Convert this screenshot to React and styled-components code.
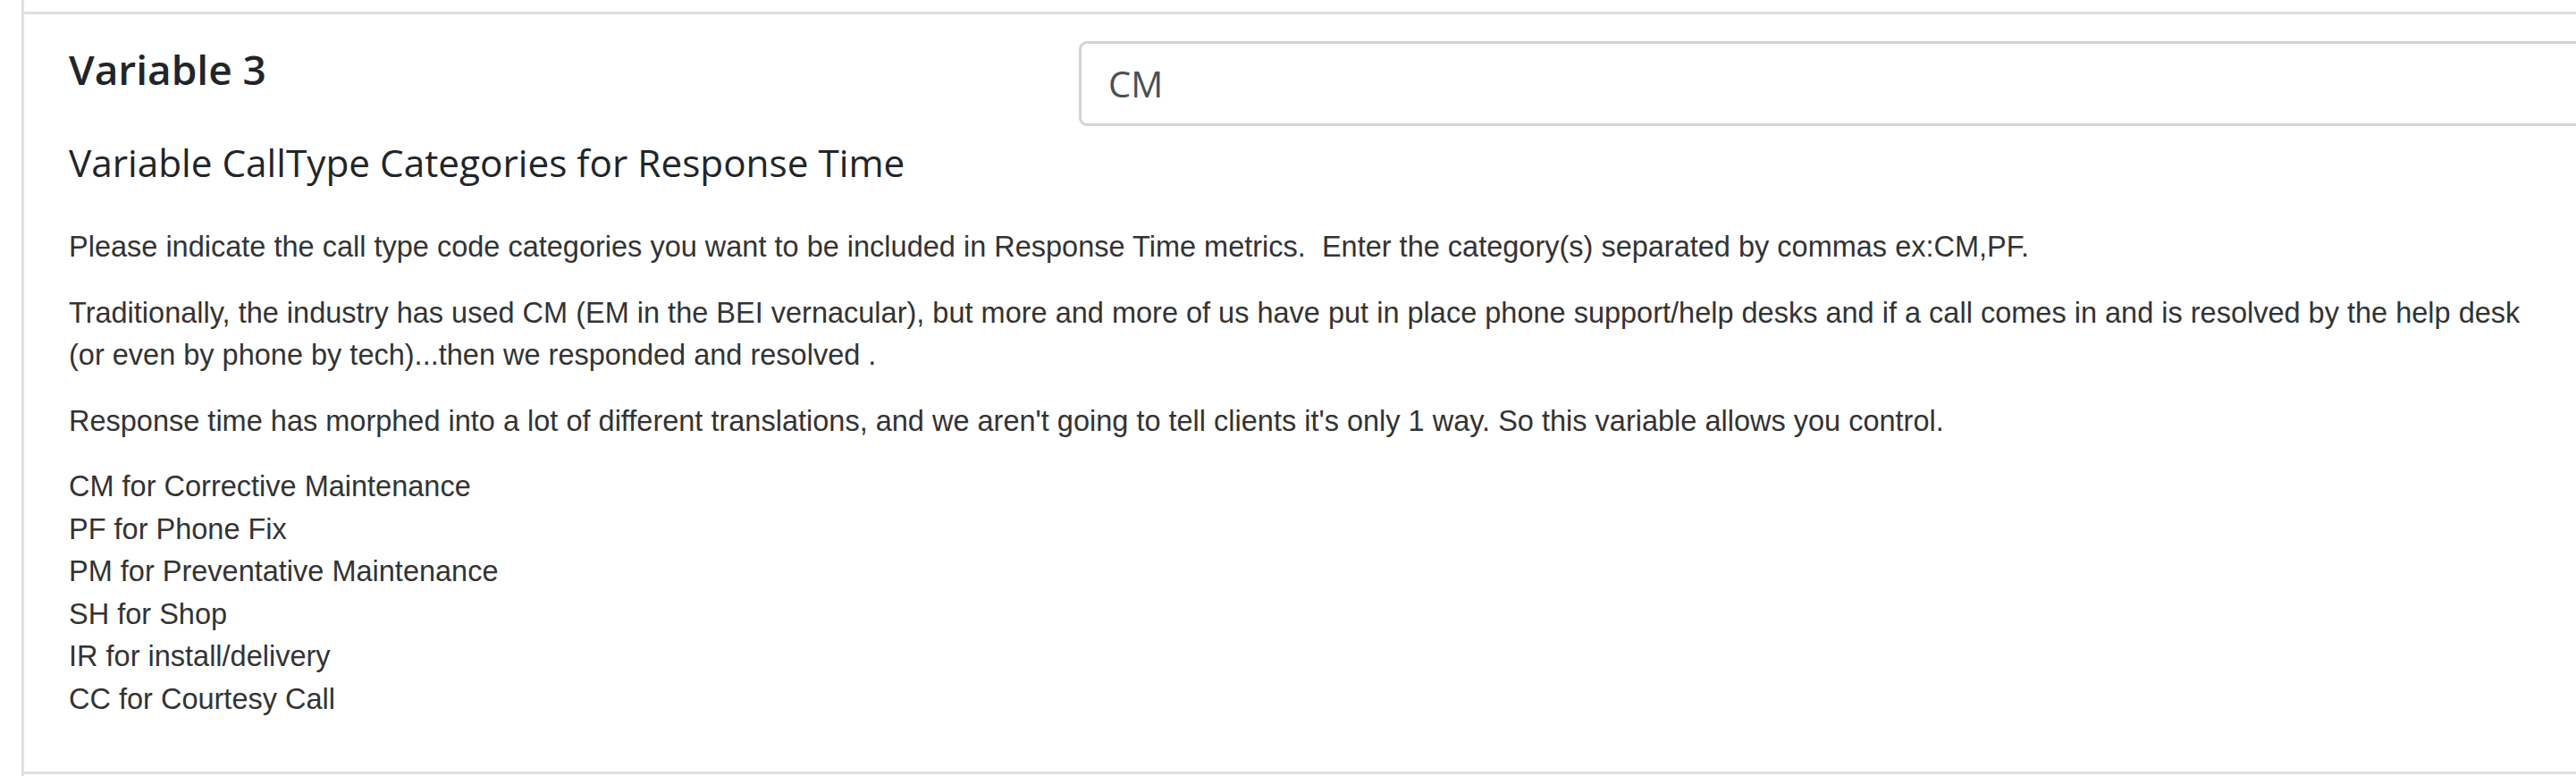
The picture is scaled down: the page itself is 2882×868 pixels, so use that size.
import React from 'react';
import styled, { createGlobalStyle } from 'styled-components';

const GlobalStyle = createGlobalStyle`
  html, body {
    margin: 0;
    padding: 0;
    background: #ffffff;
    overflow: hidden;
  }
  body {
    width: 2882px;
    height: 868px;
  }
  * { box-sizing: border-box; }
`;

const Page = styled.div`
  width: 2960px;
  padding-left: 24px;
`;

const Panel = styled.div`
  border-left: 3px solid #e0e0e0;
  padding-top: 13px;
  height: 868px;
`;

const Row = styled.section`
  border-top: 3px solid #e0e0e0;
  border-bottom: 3px solid #e0e0e0;
  padding: 0 0 57px 50px;
`;

const Header = styled.div`
  display: grid;
  grid-template-columns: 1130px 1750px;
  align-items: start;
  padding-top: 30px;
`;

const HeaderText = styled.div`
  display: flex;
  flex-direction: column;
`;

const Title = styled.h4`
  margin: 3.5px 0 0;
  font-family: "Segoe UI", "Open Sans", sans-serif;
  font-weight: 600;
  font-size: 46px;
  line-height: 55.2px;
  color: #212529;
`;

const Subtitle = styled.h5`
  margin: 52px 0 0;
  font-family: "Segoe UI", "Open Sans", sans-serif;
  font-weight: 400;
  font-size: 42.3px;
  line-height: 50.4px;
  color: #212529;
`;

const TextInput = styled.input`
  display: block;
  width: 100%;
  height: 95px;
  padding: 0 30px;
  border: 3px solid #ced4da;
  border-radius: 9px;
  background: #ffffff;
  font-family: "Segoe UI", "Open Sans", sans-serif;
  font-size: 40px;
  color: #495057;
  outline: none;
`;

const Description = styled.div`
  width: 2768px;
  margin-top: 46px;
  font-family: "Liberation Sans", Arial, sans-serif;
  font-size: 32.5px;
  line-height: 47.5px;
  color: #333333;
`;

const Paragraph = styled.p`
  margin: 0 0 26px;
`;

const CodeList = styled.div`
  display: flex;
  flex-direction: column;
`;

const CodeItem = styled.span`
  display: block;
`;

const codes = [
  'CM for Corrective Maintenance',
  'PF for Phone Fix',
  'PM for Preventative Maintenance',
  'SH for Shop',
  'IR for install/delivery',
  'CC for Courtesy Call',
];

export default function App() {
  return (
    <>
      <GlobalStyle />
      <Page>
        <Panel>
          <Row>
            <Header>
              <HeaderText>
                <Title>Variable 3</Title>
                <Subtitle>Variable CallType Categories for Response Time</Subtitle>
              </HeaderText>
              <TextInput type="text" defaultValue="CM" />
            </Header>
            <Description>
              <Paragraph>
                Please indicate the call type code categories you want to be included in Response Time metrics.{'\u00a0 '}Enter the category(s) separated by commas ex:CM,PF.
              </Paragraph>
              <Paragraph>
                Traditionally, the industry has used CM (EM in the BEI vernacular), but more and more of us have put in place phone support/help desks and if a call comes in and is resolved by the help desk (or even by phone by tech)...then we responded and resolved .
              </Paragraph>
              <Paragraph>
                Response time has morphed into a lot of different translations, and we aren't going to tell clients it's only 1 way. So this variable allows you control.
              </Paragraph>
              <CodeList>
                {codes.map((c) => (
                  <CodeItem key={c}>{c}</CodeItem>
                ))}
              </CodeList>
            </Description>
          </Row>
        </Panel>
      </Page>
    </>
  );
}
